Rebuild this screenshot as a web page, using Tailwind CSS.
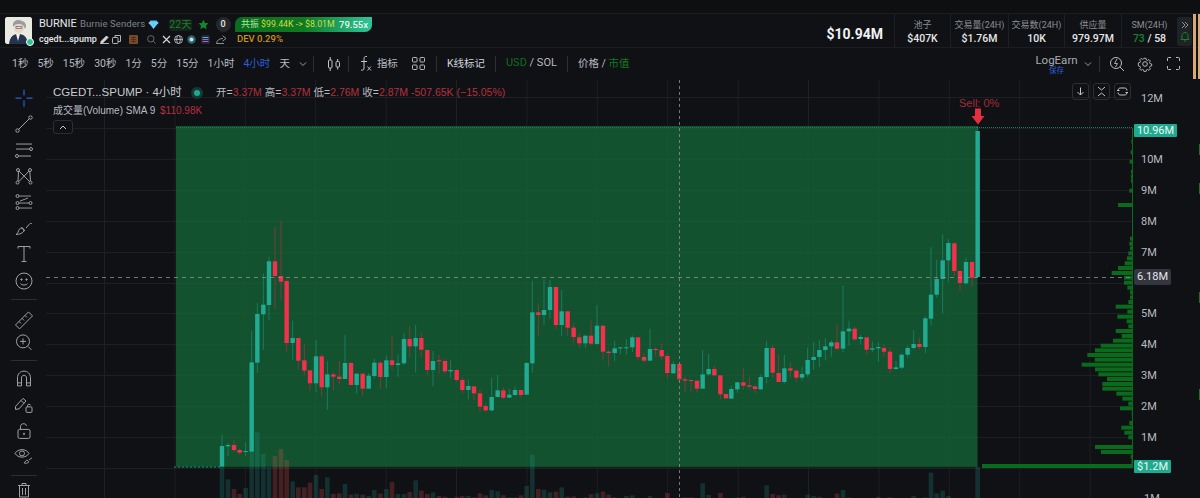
<!DOCTYPE html>
<html lang="en">
<head>
<meta charset="UTF-8">
<title>BURNIE chart</title>
<script src="https://cdn.jsdelivr.net/npm/@tailwindcss/browser@4"></script>
</head>
<body class="bg-[#101114] text-[#d1d4dc] w-[1200px] h-[498px] overflow-hidden font-['Roboto','Noto_Sans_CJK_SC',sans-serif]">

<!-- top strip -->
<div class="h-[14px] bg-[#0e0f11] border-b border-[#1b1d20]"></div>

<!-- token header -->
<header class="h-[34px] flex items-start border-b border-[#1b1d20] relative">
  <div class="relative ml-[5px] mt-[3px] w-[27px] h-[27px] rounded-[3px] bg-[#e6e8dc] overflow-hidden shrink-0">
    <svg viewBox="0 0 27 27" class="w-full h-full">
      <rect width="27" height="27" fill="#e9ebe2"/>
      <path d="M4 27 C5 19 9 17 13 17 C18 17 22 19 23 27Z" fill="#27324f"/>
      <path d="M11 17 L13 24 L15 17Z" fill="#f3f3f3"/>
      <circle cx="14" cy="11" r="5" fill="#e8d7c8"/>
      <path d="M8 10 C7 3 13 2 17 4 C21 5 22 9 20 12 C19 8 17 7 13 7 C10 7 9 9 8 10Z" fill="#9a9c9f"/>
      <rect x="11" y="9.500" width="6" height="2" fill="none" stroke="#555" stroke-width=".6"/>
    </svg>
  </div>
  <span class="absolute left-[26px] top-[24px] w-[8px] h-[8px] rounded-full bg-[#2fc28f] border border-white"></span>

  <div class="ml-[7px] mt-[3px] w-[340px] shrink-0 whitespace-nowrap">
    <div class="flex items-center h-[15px]">
      <span class="text-[11px] w-[37px] text-[#e6e7ea]">BURNIE</span>
      <span class="ml-[4px] w-[60px] text-[9.500px] text-[#7f838a] tracking-[.1px]">Burnie Senders</span>
      <svg class="ml-[8px]" width="11" height="9" viewBox="0 0 11 9"><path d="M2.500 0.500H8.500L10.500 3L5.500 8.800L0.500 3Z" fill="#55c4f5"/><path d="M0.500 3H10.500M3.500 3L5.500 8.500L7.500 3" stroke="#a9e4fb" stroke-width=".5" fill="none"/></svg>
      <span class="ml-[10px] w-[23px] h-[12px] rounded-[3px] bg-[#15231a] text-[#1f7a30] text-[10.500px] leading-[12px] text-center">22天</span>
      <svg class="ml-[5.500px]" width="11" height="11" viewBox="0 0 24 24"><path d="M12 1.500l3.300 7 7.700.9-5.700 5.200 1.500 7.600L12 18.400l-6.800 3.800 1.500-7.600L1 9.400l7.700-.9z" fill="#0f8a2c"/></svg>
      <span class="ml-[7px] w-[15px] h-[15px] rounded-full bg-[#26282c] text-[9px] leading-[15px] text-center text-[#e6e7ea] font-medium">0</span>
      <span class="ml-[4.500px] w-[137px] h-[15px] rounded-tl-[7px] rounded-br-[7px] bg-gradient-to-r from-[#0c6b1d] via-[#0f7a22] to-[#2fc69a] leading-[15px] pl-[6px] flex items-center whitespace-nowrap">
        <span class="text-[9px] text-[#a6e9a0] w-[20px]">共振</span>
        <span class="text-[8.800px] text-[#c9df3f] w-[78px]">$99.44K -&gt; $8.01M</span>
        <span class="text-[9.500px] text-[#eaf8ec] font-medium">79.55x</span>
      </span>
    </div>
    <div class="flex items-center h-[15px]">
      <span class="text-[9px] w-[56.500px] text-[#e6e7ea] font-medium">cgedt...spump</span>
      <svg class="ml-[4px]" width="9" height="9" viewBox="0 0 9 9"><path d="M1 6.500L6.500 1L8 2.500L2.500 8H1ZM0 8.700H9" stroke="#d8d9dc" stroke-width="1" fill="#d8d9dc"/></svg>
      <svg class="ml-[3.500px]" width="9" height="9" viewBox="0 0 9 9" fill="none" stroke="#c4c7cc" stroke-width=".9"><rect x=".5" y="2.500" width="5.500" height="6" rx=".8"/><path d="M3 2.500V.5H8.500V6.500H6"/></svg>
      <svg class="ml-[7.500px]" width="9" height="9" viewBox="0 0 9 9"><rect width="9" height="9" rx="1" fill="#7a4a2a"/><path d="M2 2.500H7M2 4.500H7M2 6.500H7M4.500 1V8" stroke="#4a2b18" stroke-width=".8"/></svg>
      <svg class="ml-[9px]" width="9" height="9" viewBox="0 0 9 9" fill="none" stroke="#6f7379" stroke-width=".9"><circle cx="3.800" cy="3.800" r="3.200"/><path d="M6.200 6.200L8.600 8.600"/></svg>
      <svg class="ml-[6px]" width="9" height="9" viewBox="0 0 9 9" fill="none" stroke="#d4d6da" stroke-width="1.200"><path d="M1 1L8 8M8 1L1 8"/></svg>
      <svg class="ml-[3px]" width="9" height="9" viewBox="0 0 9 9" fill="none" stroke="#c4c7cc" stroke-width=".8"><circle cx="4.500" cy="4.500" r="4"/><ellipse cx="4.500" cy="4.500" rx="1.800" ry="4"/><path d="M.5 4.500H8.500"/></svg>
      <svg class="ml-[4px]" width="9" height="9" viewBox="0 0 9 9"><circle cx="4.500" cy="4.500" r="4.200" fill="#23676d"/><circle cx="4.500" cy="4.500" r="2" fill="#d7dadd"/></svg>
      <svg class="ml-[5px]" width="9" height="9" viewBox="0 0 9 9"><rect width="9" height="9" rx="1.500" fill="#24262c"/><path d="M1.500 2.500H7.500" stroke="#3ac5c0"/><path d="M1.500 4.500H7.500" stroke="#7f6fe0"/><path d="M1.500 6.500H7.500" stroke="#b45ad8"/></svg>
      <svg class="ml-[6px]" width="11" height="9" viewBox="0 0 11 9" fill="none" stroke="#9a9da2" stroke-width=".9"><path d="M.5 8.500C1 5 3.500 3.500 7 3.500M6.500 .7L10 3.500L6.500 6.300M.5 8.500H8"/></svg>
      <span class="ml-[10.500px] text-[9.500px] text-[#c8951c] font-medium">DEV 0.29%</span>
    </div>
  </div>

  <div class="ml-auto flex items-start h-full">
    <span class="text-[14px] leading-[20px] mt-[10px] font-bold text-[#f1f2f4] mr-[11px]">$10.94M</span>
    <div class="w-[56px] h-full pt-[4px] border-l border-[#1d1f23] flex flex-col items-center justify-center">
      <span class="text-[9px] leading-[13px] text-[#8b8e94]">池子</span>
      <span class="text-[10.500px] leading-[14px] font-medium text-[#e6e7ea]">$407K</span>
    </div>
    <div class="w-[58px] h-full pt-[4px] border-l border-[#1d1f23] flex flex-col items-center justify-center">
      <span class="text-[9px] leading-[13px] text-[#8b8e94] whitespace-nowrap">交易量(24H)</span>
      <span class="text-[10.500px] leading-[14px] font-medium text-[#e6e7ea]">$1.76M</span>
    </div>
    <div class="w-[56px] h-full pt-[4px] border-l border-[#1d1f23] flex flex-col items-center justify-center">
      <span class="text-[9px] leading-[13px] text-[#8b8e94] whitespace-nowrap">交易数(24H)</span>
      <span class="text-[10.500px] leading-[14px] font-medium text-[#e6e7ea]">10K</span>
    </div>
    <div class="w-[57px] h-full pt-[4px] border-l border-[#1d1f23] flex flex-col items-center justify-center">
      <span class="text-[9px] leading-[13px] text-[#8b8e94]">供应量</span>
      <span class="text-[10.500px] leading-[14px] font-medium text-[#e6e7ea]">979.97M</span>
    </div>
    <div class="w-[56px] h-full pt-[4px] border-l border-[#1d1f23] flex flex-col items-center justify-center">
      <span class="text-[9px] leading-[13px] text-[#8b8e94]">SM(24H)</span>
      <span class="text-[10.500px] leading-[14px] font-medium text-[#e6e7ea]"><span class="text-[#14832c]">73</span> / 58</span>
    </div>
    <div class="w-[15px] h-[29px] mt-[3px] rounded-[2px] bg-[#1f2226] flex flex-col items-center justify-center gap-[2px]">
      <svg width="8" height="8" viewBox="0 0 8 8" fill="none" stroke="#9a9da2" stroke-width=".9"><path d="M1 1L4 4L1 7M4 1L7 4L4 7"/></svg>
      <svg width="10" height="11" viewBox="0 0 10 11" fill="none" stroke="#14832c" stroke-width="1"><path d="M1 8.500H9L8 7V4.500C8 3 6.800 1.500 5 1.500C3.200 1.500 2 3 2 4.500V7ZM4 10H6"/></svg>
    </div>
    <div class="w-[8px] h-full"></div>
  </div>
</header>

<!-- interval toolbar -->
<nav class="h-[31px] flex items-center text-[10.500px] text-[#b8bbc1] whitespace-nowrap relative">
  <div class="flex items-center gap-[9px] ml-[12px]">
    <span>1秒</span><span>5秒</span><span>15秒</span><span>30秒</span><span>1分</span><span>5分</span><span>15分</span><span>1小时</span>
    <span class="text-[#2a5fd8]">4小时</span><span>天</span>
  </div>
  <svg class="ml-[9px]" width="8" height="6" viewBox="0 0 8 6" fill="none" stroke="#9a9da2"><path d="M1 1.500L4 4.500L7 1.500"/></svg>
  <span class="ml-[6px] w-px h-[16px] bg-[#2c2e33]"></span>
  <svg class="ml-[12px]" width="16" height="16" viewBox="0 0 16 16" fill="none" stroke="#c4c7cc"><rect x="2.500" y="4" width="3.500" height="8" rx="1"/><path d="M4.200 1V4M4.200 12V15"/><rect x="10" y="5.500" width="3.500" height="5.500" rx="1"/><path d="M11.700 3V5.500M11.700 11V13.500"/></svg>
  <span class="ml-[6px] w-px h-[16px] bg-[#2c2e33]"></span>
  <svg class="ml-[10.500px]" width="13" height="17" viewBox="0 0 13 17" fill="none" stroke="#c4c7cc"><path d="M8 1.500C5 1 5 3 5 5V13C5 15 4 15.500 2 15M2 6.500H8"/><path d="M8.500 11.500L12 15.500M12 11.500L8.500 15.500" stroke-width=".9"/></svg>
  <span class="ml-[4.500px]">指标</span>
  <svg class="ml-[14.500px]" width="13" height="13" viewBox="0 0 13 13" fill="none" stroke="#b8bbc1"><rect x=".5" y=".5" width="4.500" height="4.500" rx=".8"/><rect x="8" y=".5" width="4.500" height="4.500" rx=".8"/><rect x=".5" y="8" width="4.500" height="4.500" rx=".8"/><rect x="8" y="8" width="4.500" height="4.500" rx=".8"/></svg>
  <span class="ml-[10.500px] w-px h-[16px] bg-[#2c2e33]"></span>
  <span class="ml-[10px] text-[#d1d4dc]">K线标记</span>
  <span class="ml-[10px] w-px h-[16px] bg-[#2c2e33]"></span>
  <span class="ml-[10px] text-[11px]"><span class="text-[#0f6e20]">USD</span> / SOL</span>
  <span class="ml-[10px] w-px h-[16px] bg-[#2c2e33]"></span>
  <span class="ml-[10px]">价格 / <span class="text-[#0f7a22]">市值</span></span>
  <div class="ml-auto flex items-center mr-[20.500px]">
    <div class="flex flex-col items-center w-[40px]">
      <span class="text-[11.500px] leading-[13px] text-[#a9acb2]">LogEarn</span>
      <span class="text-[7.500px] leading-[7px] text-[#2a5fd8]">保存</span>
    </div>
    <svg class="ml-[7.500px]" width="8" height="6" viewBox="0 0 8 6" fill="none" stroke="#9a9da2"><path d="M1 1.500L4 4.500L7 1.500"/></svg>
    <span class="ml-[7px] w-px h-[16px] bg-[#2c2e33]"></span>
    <svg class="ml-[9px]" width="16" height="16" viewBox="0 0 16 16" fill="none" stroke="#b8bbc1"><circle cx="7" cy="7" r="5.500"/><path d="M11 11L15 15"/><path d="M8 3L5.500 7.500H8.500L6.500 11" stroke-width=".9"/></svg>
    <svg class="ml-[12px]" width="16" height="16" viewBox="0 0 24 24" fill="none" stroke="#b8bbc1" stroke-width="1.500"><circle cx="12" cy="12" r="3.500"/><path d="M10.300 2.500h3.400l.6 2.900 1.800.8 2.500-1.600 2.400 2.400-1.600 2.500.8 1.800 2.900.6v3.400l-2.900.6-.8 1.800 1.600 2.500-2.400 2.400-2.500-1.600-1.800.8-.6 2.900h-3.400l-.6-2.900-1.800-.8-2.500 1.600-2.400-2.400 1.600-2.500-.8-1.800-2.900-.6V10l2.900-.6.8-1.800L3.100 5l2.400-2.400 2.500 1.600 1.800-.8z" transform="translate(1.200 1.200) scale(.9)"/></svg>
    <svg class="ml-[13.500px]" width="13" height="13" viewBox="0 0 13 13" fill="none" stroke="#b8bbc1"><path d="M.5 4V1.500a1 1 0 0 1 1-1H4M9 .5h2.500a1 1 0 0 1 1 1V4M12.500 9v2.500a1 1 0 0 1-1 1H9M4 12.500H1.500a1 1 0 0 1-1-1V9"/></svg>
  </div>
</nav>

<div class="flex h-[419px]">
  <!-- drawing tools -->
  <aside class="w-[46px] shrink-0 flex flex-col items-center pt-[6px] pl-[2px]">
    <svg class="h-[26.300px]" width="20" height="20" viewBox="0 0 20 20" stroke="#2a5fd8" stroke-width="1.200"><path d="M10 1.500V7.500M10 12.500V18.500M1.500 10H7.500M12.500 10H18.500"/></svg>
    <svg class="h-[26.300px]" width="18" height="18" viewBox="0 0 18 18" fill="none" stroke="#9fa2a7"><circle cx="2.500" cy="15.500" r="1.700"/><circle cx="15.500" cy="2.500" r="1.700"/><path d="M3.700 14.300L14.300 3.700"/></svg>
    <svg class="h-[26.300px]" width="20" height="18" viewBox="0 0 20 18" fill="none" stroke="#9fa2a7"><path d="M2 3H18M2 8H15.500M5 15H17"/><circle cx="17" cy="8" r="1.500"/><circle cx="3" cy="15" r="1.500"/></svg>
    <svg class="h-[26.300px]" width="18" height="18" viewBox="0 0 18 18" fill="none" stroke="#9fa2a7"><circle cx="3" cy="3" r="1.500"/><circle cx="15" cy="3" r="1.500"/><circle cx="2.500" cy="15.500" r="1.500"/><circle cx="15.500" cy="15.500" r="1.500"/><path d="M3.500 4.500L3 14M4 4L14.500 14.500M14 4L4 14.500M14.800 4.500L15.500 14"/></svg>
    <svg class="h-[26.300px]" width="18" height="18" viewBox="0 0 18 18" fill="none" stroke="#9fa2a7"><circle cx="2.500" cy="3" r="1.500"/><circle cx="2.500" cy="10" r="1.500"/><circle cx="2.500" cy="15" r="1.500"/><circle cx="15.500" cy="10" r="1.500"/><path d="M4 3H16M4 10H14M4 15H17M5 8L13 5" stroke-width=".9"/></svg>
    <svg class="h-[26.300px]" width="20" height="18" viewBox="0 0 20 18" fill="none" stroke="#9fa2a7"><path d="M2 15.500C4 15 4 12 5.500 10C7.500 8 10 9 10 11C10 14 5 15.500 2 15.500ZM7 8.500L11 12M12 9L15 5.500C16 4 17.500 4 18 5"/></svg>
    <svg class="h-[26.300px]" width="16" height="18" viewBox="0 0 16 18" fill="none" stroke="#9fa2a7"><path d="M2 3.500V1.500H14V3.500M8 1.500V16.500M5.500 16.500H10.500"/></svg>
    <svg class="h-[26.300px]" width="18" height="18" viewBox="0 0 18 18" fill="none" stroke="#9fa2a7"><circle cx="9" cy="9" r="8"/><circle cx="6.500" cy="7.500" r=".7" fill="#9fa2a7"/><circle cx="11.500" cy="7.500" r=".7" fill="#9fa2a7"/><path d="M5.500 11.500C7 13.500 11 13.500 12.500 11.500"/></svg>
    <span class="w-[26px] h-px bg-[#2c2e33] mt-[5px] mb-[9px]"></span>
    <svg class="h-[23px]" width="20" height="20" viewBox="0 0 20 20" fill="none" stroke="#9fa2a7"><path d="M1.500 14.500L14.500 1.500L18.500 5.500L5.500 18.500ZM5 11L7 13M8 8L10 10M11 5L13 7"/></svg>
    <svg class="h-[23px]" width="18" height="18" viewBox="0 0 18 18" fill="none" stroke="#9fa2a7"><circle cx="8" cy="8" r="6.500"/><path d="M13 13L16.500 16.500M8 5V11M5 8H11"/></svg>
    <span class="w-[26px] h-px bg-[#2c2e33] mt-[5.500px] mb-[5.250px]"></span>
    <svg class="h-[26px]" width="16" height="18" viewBox="0 0 16 18" fill="none" stroke="#9fa2a7"><path d="M1.500 16V8C1.500 -1 14.500 -1 14.500 8V16H10.500V8C10.500 4.500 5.500 4.500 5.500 8V16ZM1.500 13H5.500M10.500 13H14.500"/></svg>
    <svg class="h-[26px]" width="20" height="18" viewBox="0 0 20 18" fill="none" stroke="#9fa2a7"><path d="M1.500 10.500L9 2.500L12 5L5 13L1.500 13.500ZM7 4.500L10 7.500"/><rect x="12" y="11" width="6" height="5.500" rx="1"/><path d="M13.500 11V9.500C13.500 8 16.500 8 16.500 9.500"/></svg>
    <svg class="h-[26px]" width="14" height="18" viewBox="0 0 14 18" fill="none" stroke="#9fa2a7"><rect x="1" y="7.500" width="12" height="9" rx="1.500"/><path d="M3.500 7.500V4.500C3.500 1 9.500 1 9.500 4"/><rect x="6.200" y="11" width="1.600" height="2" fill="#9fa2a7" stroke="none"/></svg>
    <svg class="h-[26px]" width="20" height="18" viewBox="0 0 20 18" fill="none" stroke="#9fa2a7"><path d="M1 6.500C4 1.500 12 1.500 15 6.500C12 11.500 4 11.500 1 6.500Z"/><circle cx="8" cy="6.500" r="2.500"/><path d="M10 16L13 13L15 15L12.500 16.500ZM15 13L18 11" stroke-width=".9"/></svg>
    <span class="w-[26px] h-px bg-[#2c2e33] mt-[6px] mb-[6px]"></span>
    <svg class="shrink-0" width="14" height="16" viewBox="0 0 14 16" fill="none" stroke="#9fa2a7"><path d="M1 3.500H13M5 3.500V1.500H9V3.500M2.500 3.500V15H11.500V3.500M5.500 6V13M8.500 6V13"/></svg>
  </aside>

  <!-- chart pane, svg uses page coordinates -->
  <main class="relative w-[1147px] h-[419px] text-[11px] text-[#b8bbc1]">
    <svg id="chart" class="absolute inset-0" width="1147" height="419" viewBox="46 79 1147 419"></svg>

    <div class="absolute left-[7px] top-[5px] flex items-center whitespace-nowrap font-['Liberation_Sans','Noto_Sans_CJK_SC',sans-serif]">
      <span class="text-[11.500px] w-[127px] text-[#c8cbd1]">CGEDT...SPUMP · 4小时</span>
      <span class="ml-[11px] w-[12px] h-[12px] rounded-full bg-[#143a32] flex items-center justify-center"><span class="w-[6px] h-[6px] rounded-full bg-[#1fa98f]"></span></span>
      <span class="ml-[13px] text-[10.500px]">开=<span class="text-[#b5303f]">3.37M</span> 高=<span class="text-[#b5303f]">3.37M</span> 低=<span class="text-[#b5303f]">2.76M</span> 收=<span class="text-[#b5303f]">2.87M</span> <span class="text-[#b5303f]">-507.65K (−15.05%)</span></span>
    </div>
    <div class="absolute left-[7px] top-[24px] text-[10px] whitespace-nowrap font-['Liberation_Sans','Noto_Sans_CJK_SC',sans-serif]">成交量(Volume) SMA 9 <span class="ml-[2px] text-[#b5303f]">$110.98K</span></div>
    <div class="absolute left-[7px] top-[41px] w-[20px] h-[14px] rounded-[3px] border border-[#2c2e33] bg-[#101114] flex items-center justify-center">
      <svg width="8" height="5" viewBox="0 0 8 5" fill="none" stroke="#c4c7cc"><path d="M1 4L4 1L7 4"/></svg>
    </div>

    <div class="absolute left-[913px] top-[16px] text-[11px] text-[#a32c3a] whitespace-nowrap font-['Liberation_Sans',sans-serif]">Sell: 0%</div>

    <div class="absolute left-[1026px] top-[4px] flex gap-[4px]">
      <span class="w-[17px] h-[17px] rounded-[3px] border border-[#2c2e33] flex items-center justify-center">
        <svg width="9" height="9" viewBox="0 0 9 9" fill="none" stroke="#c4c7cc"><path d="M4.500 .5V8M1.500 5L4.500 8L7.500 5"/></svg>
      </span>
      <span class="w-[17px] h-[17px] rounded-[3px] border border-[#2c2e33] flex items-center justify-center">
        <svg width="9" height="11" viewBox="0 0 9 11" fill="none" stroke="#c4c7cc"><path d="M1 1L4.500 4L8 1M1 10L4.500 7L8 10"/></svg>
      </span>
      <span class="w-[17px] h-[17px] rounded-[3px] border border-[#2c2e33] flex items-center justify-center">
        <svg width="11" height="9" viewBox="0 0 11 9" fill="none" stroke="#c4c7cc"><path d="M1 3.500C1 1 3 1 4 1H7C8 1 10 1 10 3.500M10 5.500C10 8 8 8 7 8H4C3 8 1 8 1 5.500M0 3.500H2.500M8.500 5.500H11"/></svg>
      </span>
    </div>

    <span class="absolute left-[1095px] top-[12px]">12M</span>
    <span class="absolute left-[1095px] top-[73px]">10M</span>
    <span class="absolute left-[1095px] top-[104px]">9M</span>
    <span class="absolute left-[1095px] top-[135px]">8M</span>
    <span class="absolute left-[1095px] top-[166px]">7M</span>
    <span class="absolute left-[1095px] top-[227px]">5M</span>
    <span class="absolute left-[1095px] top-[258px]">4M</span>
    <span class="absolute left-[1095px] top-[289px]">3M</span>
    <span class="absolute left-[1095px] top-[320px]">2M</span>
    <span class="absolute left-[1095px] top-[351px]">1M</span>
    <span class="absolute left-[1095px] top-[412px]">-1M</span>

    <span class="absolute left-[1088px] top-[45px] w-[43px] h-[13px] rounded-[1px] bg-[#1fa98f] text-[#eaf8f4] leading-[13px] text-center">10.96M</span>
    <span class="absolute left-[1088px] top-[190px] w-[37px] h-[16px] rounded-[2px] bg-[#33353f] text-[#e6e7ea] leading-[16px] text-center">6.18M</span>
    <span class="absolute left-[1088px] top-[381px] w-[37px] h-[13px] rounded-[1px] bg-[#1fa98f] text-[#eaf8f4] leading-[13px] text-center">$1.2M</span>
  </main>

  <div class="w-[7px] relative">
    <span class="absolute left-[6px] top-[65px] w-px h-[11px] bg-[#0f7a22]"></span>
    <span class="absolute left-[6px] top-[104px] w-px h-[11px] bg-[#0f7a22]"></span>
    <span class="absolute left-[6px] top-[213px] w-px h-[11px] bg-[#0f7a22]"></span>
    <span class="absolute left-[6px] top-[310px] w-px h-[11px] bg-[#0f7a22]"></span>
  </div>
</div>

<!-- stray colour bar at the edge of the top right -->
<span class="absolute left-[1193px] top-[14px] w-[3px] h-[65px] bg-[#d9a878]"></span>
<span class="absolute left-[1198px] top-[14px] w-[2px] h-[65px] bg-[#d9a878]"></span>

<script>
  const chart = document.getElementById("chart");
  const NS = "http://www.w3.org/2000/svg";
  const rect = (x, y, w, h, fill, op) => {
    const r = document.createElementNS(NS, "rect");
    r.setAttribute("x", x); r.setAttribute("y", y);
    r.setAttribute("width", w); r.setAttribute("height", Math.max(h, 0));
    r.setAttribute("fill", fill);
    if (op) r.setAttribute("opacity", op);
    chart.appendChild(r);
  };
  const line = (x1, y1, x2, y2, stroke, dash, sw, op) => {
    const l = document.createElementNS(NS, "line");
    l.setAttribute("x1", x1); l.setAttribute("y1", y1);
    l.setAttribute("x2", x2); l.setAttribute("y2", y2);
    l.setAttribute("stroke", stroke);
    l.setAttribute("stroke-width", sw || 1);
    if (dash) l.setAttribute("stroke-dasharray", dash);
    if (op) l.setAttribute("opacity", op);
    chart.appendChild(l);
  };

  // [x, bodyTop, bodyBottom, wickTop, wickBottom, g/r, volumeTop], in 3x coords of each section
  const sections = [
    { ox: 170, oy: 210, c: [
      [156,708,770,675,770,"g",772],[174,705,709,700,738,"g",808],[192,705,720,690,727,"r",837],[209,720,728,716,734,"r",852],
      [227,723,725,697,738,"g",834],[245,457,725,363,725,"g",725],[262,312,458,280,488,"g",667],[280,284,313,191,419,"g",732],
      [297,154,285,140,330,"g",772],[315,154,198,50,297,"r",738],[333,198,215,33,270,"r",717],[350,213,399,208,427,"r",750],
      [368,384,399,332,449,"g",814],[385,384,452,384,480,"r",832],[403,451,482,403,496,"r",832],[420,481,520,481,543,"r",818],
      [438,439,520,390,547,"g",795],[455,439,532,432,560,"r",837],[472,493,532,453,599,"g",802],[490,493,500,486,542,"r",852],
      [508,500,507,453,524,"r",850],[525,459,507,375,507,"g",822],[543,459,525,455,525,"r",854],[560,491,525,491,551,"g",851],
      [578,491,536,491,558,"r",854],[596,497,536,489,536,"g",858],[613,458,498,446,505,"g",840],[631,458,501,455,537,"r",851],
      [649,451,501,437,534,"g",837],[666,451,465,378,482,"r",816],[684,460,465,433,501,"g",852],[702,387,460,369,465,"g",852],
      [719,387,409,349,442,"r",846],[737,384,409,345,487,"g",811],[754,384,419,367,441,"r",842],[772,420,480,420,496,"r",852],
      [789,453,480,423,529,"g",847],[807,451,454,435,491,"r",858],[825,453,484,447,491,"r",860],[842,480,484,451,505,"g",864],
      [860,480,510,476,516,"r",860],[877,510,540,502,552,"r",858],[895,528,540,508,568,"g",858]
    ]},
    { ox: 470, oy: 260, c: [
      [12,379,400,379,420,"r",712],[30,400,440,388,456,"r",700],[47,438,451,430,456,"r",706],[65,411,451,354,455,"g",690],
      [83,391,411,345,411,"g",694],[100,391,413,382,417,"r",706],[118,404,413,387,413,"g",712],[135,390,405,380,407,"g",712],
      [153,390,405,390,412,"r",706],[170,309,404,306,404,"g",678],[187,157,310,63,338,"g",584],[205,157,165,130,227,"r",687],
      [222,150,165,57,195,"g",689],[240,81,150,60,176,"g",697],[258,81,195,81,207,"r",695],[275,154,195,90,228,"g",682],
      [293,154,203,154,227,"r",710],[311,203,231,190,250,"r",709],[328,232,250,220,263,"r",714],[346,227,250,226,263,"g",712],
      [363,227,251,182,256,"r",703],[381,197,252,135,255,"g",700],[399,197,275,197,302,"r",695],[416,275,279,270,320,"r",704],
      [434,265,279,243,304,"g",712],[451,262,265,262,282,"g",714],[469,262,265,238,285,"g",708],[487,232,262,226,276,"g",706],
      [504,232,291,232,300,"r",714],[522,291,302,278,308,"r",714],[540,267,302,207,302,"g",708],[557,267,270,262,290,"r",714],
      [575,270,289,250,300,"r",714],[592,288,339,280,356,"r",699],[610,312,340,303,342,"g",714],[628,312,358,308,365,"r",714],
      [645,358,362,350,395,"r",712],[663,360,362,360,395,"r",712],[681,362,386,362,398,"r",714],[698,343,386,270,386,"g",670],
      [716,327,343,282,347,"g",705],[733,327,346,317,346,"r",714],[751,346,403,346,418,"r",699],[768,402,415,402,416,"r",714]
    ]},
    { ox: 730, oy: 220, c: [
      [4,507,536,498,536,"g",834],[22,487,508,487,518,"g",832],[40,487,497,445,509,"r",830],[58,496,500,470,506,"r",834],
      [75,499,507,499,520,"r",834],[92,471,508,463,510,"g",834],[110,384,471,362,490,"g",796],[128,384,458,375,473,"r",822],
      [146,459,486,404,486,"r",826],[163,445,486,404,491,"g",824],[181,445,452,427,473,"r",834],[199,452,473,448,486,"r",834],
      [216,462,473,440,483,"g",834],[233,420,463,383,471,"g",824],[251,411,420,366,450,"g",828],[268,390,411,361,441,"g",830],
      [286,379,390,354,421,"g",834],[304,367,379,361,410,"g",834],[321,367,386,312,390,"r",821],[339,334,386,197,397,"g",810],
      [357,326,334,303,377,"g",832],[374,326,358,319,362,"r",834],[392,351,357,345,373,"g",834],[410,352,389,352,404,"r",834],
      [427,385,389,365,397,"g",834],[445,381,385,367,426,"g",830],[462,384,395,373,411,"r",834],[480,395,447,383,459,"r",832],
      [498,442,447,423,449,"g",834],[515,404,443,400,447,"g",834],[533,384,404,377,413,"g",834],[551,372,384,331,388,"g",828],
      [568,372,381,353,388,"r",834],[586,295,381,289,399,"g",832],[603,224,296,82,316,"g",758],[620,177,224,119,233,"g",820],
      [638,121,177,43,281,"g",812],[655,69,121,57,186,"g",828],[673,70,153,70,168,"r",834],[690,153,189,150,214,"r",834],
      [708,126,190,113,193,"g",834],[726,126,173,126,199,"r",834],[743,-267,171,-282,171,"g",740]
    ]}
  ];

  // grid
  for (let x = 104.5; x < 1130; x += 70.4) line(x, 80, x, 498, "#1c1f23");
  for (const y of [97.5,128.5,159.5,190.5,221.5,252.5,283.5,313.5,344.5,375.5,406.5,437.5,468.5]) line(46, y, 1132, y, "#1c1f23");

  // range zone
  rect(176, 126, 801.5, 341, "#12522f");
  for (let x = 245; x < 977; x += 70.4) line(x, 126, x, 467, "#fff", "", .5, ".035");
  for (const y of [128.5,159.5,190.5,221.5,252.5,283.5,313.5,344.5,375.5,406.5,437.5]) line(176, y, 977, y, "#fff", "", .5, ".04");
  line(176, 467, 977, 467, "#0d3a22");
  line(977, 127.5, 1132, 127.5, "#1f7a68", "1 1");
  line(176, 127.5, 977, 127.5, "#1c8a5c", "1 1", .8);
  line(174, 467, 222, 467, "#1fa98f", "2 2", .8);

  // volume profile
  const bars = [[65,394],[97,392],[125,389],[155,393],[170,393],[183,393],[212,388],[226,396],[255,354],[270,396],[300,396],[325,396],[356,390],[371,388],[385,390],[400,385],[415,381],[430,374],[444,354],[459,335],[473,372],[488,372],[503,382],[517,390],[532,390],[546,385],[560,347],[575,382],[590,352],[604,380],[619,385],[633,347],[648,365],[662,339],[677,302],[691,285],[705,262],[719,284],[734,245],[748,285],[763,295],[777,321],[792,307],[806,307],[821,349],[836,367],[851,385],[865,360],[880,395],[895,396],[909,388],[923,364],[938,373],[952,385],[967,396],[981,285],[996,303],[1010,392],[1025,394]];
  line(1132.5, 128, 1132.5, 467, "#0b6b1c");
  for (const [zy, zl] of bars) rect(1000 + zl / 3, 120 + zy / 3 - 2, 133 - zl / 3, 4, "#0b6b1c");
  rect(982, 464, 151, 4, "#0b6b1c");

  // candles
  const GREEN = "#21ab93", RED = "#f4304c";
  for (const s of sections) {
    for (const [zx, t, b, wt, wb, c, vol] of s.c) {
      const x = s.ox + zx / 3, col = c === "g" ? GREEN : RED;
      const volCol = c === "g" ? "#26a69a" : "#ef5350";
      rect(x - 2.3, s.oy + vol / 3, 4.6, 498 - (s.oy + vol / 3), volCol, c === "g" ? ".22" : ".24");
      rect(x - .5, s.oy + wt / 3, 1, (wb - wt) / 3, c === "g" ? "#1b8a72" : "#a0343f", ".75");
      rect(x - 2.2, s.oy + t / 3, 4.4, Math.max((b - t) / 3, 1), col);
    }
  }

  // crosshair
  line(679.5, 80, 679.5, 498, "#8c9096", "3 3", 1, ".8");
  line(46, 277.5, 1132, 277.5, "#8c9096", "4 4", 1, ".8");

  // sell arrow
  const arrow = document.createElementNS(NS, "path");
  arrow.setAttribute("d", "M975 108.5H981V116H984.5L978 124.5L971.5 116H975Z");
  arrow.setAttribute("fill", "#e2303f");
  chart.appendChild(arrow);
</script>
</body>
</html>
